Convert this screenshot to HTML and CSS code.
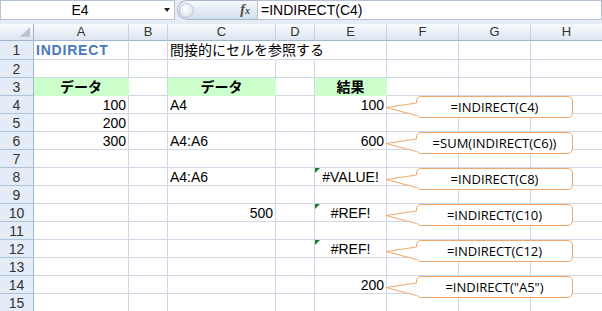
FILE: index.html
```html
<!DOCTYPE html>
<html lang="ja">
<head>
    <meta charset="UTF-8">
    <title>INDIRECT</title>
    <link rel="stylesheet" href="styles.css">
</head>
<body>

    <div class="formula-bar">
        <div class="name-box"><span class="name">E4</span><span class="drop"></span></div>
        <div class="fx-pill"><span class="bead"></span><span class="fx">f<small>x</small></span></div>
        <div class="formula">=INDIRECT(C4)</div>
    </div>

    <div class="sheet">
        <div class="grid">
            <!-- column headers -->
            <div class="corner"><span class="corner-mark"></span></div>
            <div class="col-head">A</div><div class="col-head">B</div><div class="col-head">C</div><div class="col-head">D</div>
            <div class="col-head">E</div><div class="col-head">F</div><div class="col-head">G</div><div class="col-head">H</div>

            <!-- 1 -->
            <div class="row-head">1</div>
            <div class="cell title">INDIRECT</div><div class="cell"></div><div class="cell spill">間接的にセルを参照する</div><div class="cell spill"></div>
            <div class="cell"></div><div class="cell"></div><div class="cell"></div><div class="cell"></div>
            <!-- 2 -->
            <div class="row-head">2</div>
            <div class="cell"></div><div class="cell"></div><div class="cell"></div><div class="cell"></div>
            <div class="cell"></div><div class="cell"></div><div class="cell"></div><div class="cell"></div>
            <!-- 3 -->
            <div class="row-head">3</div>
            <div class="cell head">データ</div><div class="cell"></div><div class="cell head">データ</div><div class="cell"></div>
            <div class="cell head">結果</div><div class="cell"></div><div class="cell"></div><div class="cell"></div>
            <!-- 4 -->
            <div class="row-head">4</div>
            <div class="cell num">100</div><div class="cell"></div><div class="cell">A4</div><div class="cell"></div>
            <div class="cell num">100</div><div class="cell"></div><div class="cell"></div><div class="cell"></div>
            <!-- 5 -->
            <div class="row-head">5</div>
            <div class="cell num">200</div><div class="cell"></div><div class="cell"></div><div class="cell"></div>
            <div class="cell"></div><div class="cell"></div><div class="cell"></div><div class="cell"></div>
            <!-- 6 -->
            <div class="row-head">6</div>
            <div class="cell num">300</div><div class="cell"></div><div class="cell">A4:A6</div><div class="cell"></div>
            <div class="cell num">600</div><div class="cell"></div><div class="cell"></div><div class="cell"></div>
            <!-- 7 -->
            <div class="row-head">7</div>
            <div class="cell"></div><div class="cell"></div><div class="cell"></div><div class="cell"></div>
            <div class="cell"></div><div class="cell"></div><div class="cell"></div><div class="cell"></div>
            <!-- 8 -->
            <div class="row-head">8</div>
            <div class="cell"></div><div class="cell"></div><div class="cell">A4:A6</div><div class="cell"></div>
            <div class="cell err">#VALUE!</div><div class="cell"></div><div class="cell"></div><div class="cell"></div>
            <!-- 9 -->
            <div class="row-head">9</div>
            <div class="cell"></div><div class="cell"></div><div class="cell"></div><div class="cell"></div>
            <div class="cell"></div><div class="cell"></div><div class="cell"></div><div class="cell"></div>
            <!-- 10 -->
            <div class="row-head">10</div>
            <div class="cell"></div><div class="cell"></div><div class="cell num">500</div><div class="cell"></div>
            <div class="cell err">#REF!</div><div class="cell"></div><div class="cell"></div><div class="cell"></div>
            <!-- 11 -->
            <div class="row-head">11</div>
            <div class="cell"></div><div class="cell"></div><div class="cell"></div><div class="cell"></div>
            <div class="cell"></div><div class="cell"></div><div class="cell"></div><div class="cell"></div>
            <!-- 12 -->
            <div class="row-head">12</div>
            <div class="cell"></div><div class="cell"></div><div class="cell"></div><div class="cell"></div>
            <div class="cell err">#REF!</div><div class="cell"></div><div class="cell"></div><div class="cell"></div>
            <!-- 13 -->
            <div class="row-head">13</div>
            <div class="cell"></div><div class="cell"></div><div class="cell"></div><div class="cell"></div>
            <div class="cell"></div><div class="cell"></div><div class="cell"></div><div class="cell"></div>
            <!-- 14 -->
            <div class="row-head">14</div>
            <div class="cell"></div><div class="cell"></div><div class="cell"></div><div class="cell"></div>
            <div class="cell num">200</div><div class="cell"></div><div class="cell"></div><div class="cell"></div>
            <!-- 15 -->
            <div class="row-head">15</div>
            <div class="cell"></div><div class="cell"></div><div class="cell"></div><div class="cell"></div>
            <div class="cell"></div><div class="cell"></div><div class="cell"></div><div class="cell"></div>
        </div>

        <!-- callouts over the sheet -->
        <div class="notes">
            <div class="note at4">=INDIRECT(C4)
                <svg viewBox="0 0 33 22"><polygon points="1,11.5 32.5,7 32.5,19.5" fill="#fff"/><polyline points="31.5,7 1,11.5 31.5,19.5" fill="none" stroke="#f2a868"/></svg>
            </div>
            <div class="note at6">=SUM(INDIRECT(C6))
                <svg viewBox="0 0 33 22"><polygon points="1,11.5 32.5,7 32.5,19.5" fill="#fff"/><polyline points="31.5,7 1,11.5 31.5,19.5" fill="none" stroke="#f2a868"/></svg>
            </div>
            <div class="note at8">=INDIRECT(C8)
                <svg viewBox="0 0 33 22"><polygon points="1,11.5 32.5,7 32.5,19.5" fill="#fff"/><polyline points="31.5,7 1,11.5 31.5,19.5" fill="none" stroke="#f2a868"/></svg>
            </div>
            <div class="note at10">=INDIRECT(C10)
                <svg viewBox="0 0 33 22"><polygon points="1,11.5 32.5,7 32.5,19.5" fill="#fff"/><polyline points="31.5,7 1,11.5 31.5,19.5" fill="none" stroke="#f2a868"/></svg>
            </div>
            <div class="note at12">=INDIRECT(C12)
                <svg viewBox="0 0 33 22"><polygon points="1,11.5 32.5,7 32.5,19.5" fill="#fff"/><polyline points="31.5,7 1,11.5 31.5,19.5" fill="none" stroke="#f2a868"/></svg>
            </div>
            <div class="note at14">=INDIRECT("A5")
                <svg viewBox="0 0 33 22"><polygon points="1,11.5 32.5,7 32.5,19.5" fill="#fff"/><polyline points="31.5,7 1,11.5 31.5,19.5" fill="none" stroke="#f2a868"/></svg>
            </div>
        </div>
    </div>

</body>
</html>
```

FILE: styles.css
```css
body {
    margin: 0;
    width: 602px;
    height: 311px;
    overflow: hidden;
    background: #fff;
    font-family: "Liberation Sans", "Noto Sans CJK JP", sans-serif;
    color: #000;
}

/* formula bar */

.formula-bar {
    display: flex;
    height: 24px;
    padding-bottom: 4px;
    box-sizing: border-box;
    background: #e6ecf4;
}

.name-box {
    width: 175px;
    height: 20px;
    box-sizing: border-box;
    display: flex;
    align-items: center;
    background: #fff;
    border: 1px solid #b4c2d4;
}

.name {
    width: 158px;
    text-align: center;
    font-size: 14px;
}

.drop {
    border-style: solid;
    border-width: 4px 3.5px 0;
    border-color: #222 transparent transparent;
    margin-left: 5px;
}

.fx-pill {
    width: 80px;
    height: 20px;
    margin-left: 2px;
    box-sizing: border-box;
    display: flex;
    align-items: center;
    justify-content: space-between;
    padding: 0 7px 0 1px;
    border: 1px solid #a6b7cd;
    border-right: 0;
    border-radius: 10px 0 0 10px;
    background: linear-gradient(#f6f9fc, #d3dfee);
}

.bead {
    width: 15px;
    height: 15px;
    box-sizing: border-box;
    border-radius: 50%;
    border: 1px solid #b8c6d8;
    background: radial-gradient(circle at 40% 35%, #fff, #d0dbe9);
}

.fx {
    font-family: "Liberation Serif", serif;
    font-style: italic;
    font-weight: bold;
    font-size: 14px;
    color: #4a4a4a;
}

.fx small {
    font-size: 10px;
}

.formula {
    flex: 1;
    height: 20px;
    box-sizing: border-box;
    padding-left: 3px;
    border: 1px solid #b4c2d4;
    background: #fff;
    font-size: 14px;
    line-height: 18px;
}

/* sheet */

.sheet {
    position: relative;
}

.grid,
.notes {
    display: grid;
    width: 603px;
    grid-template-columns: 34px 95px 39px 108px 39px 72px 72px 72px 72px;
    grid-template-rows: 17px 19px repeat(14, 18px);
}

.corner,
.col-head {
    box-sizing: border-box;
    background: linear-gradient(#f9fbfd, #dce5f1);
    border-right: 1px solid #c5d2e2;
    border-bottom: 1px solid #9eb6ce;
}

.corner {
    display: flex;
    justify-content: flex-end;
    align-items: flex-end;
    padding: 0 3px 3px 0;
    border-right-color: #9eb6ce;
}

.corner-mark {
    border-style: solid;
    border-width: 0 0 10px 10px;
    border-color: transparent transparent #b7c5d7;
}

.col-head {
    text-align: center;
    font-size: 13px;
    line-height: 16px;
    color: #333;
}

.row-head {
    box-sizing: border-box;
    background: #e4ecf7;
    border-right: 1px solid #9eb6ce;
    border-bottom: 1px solid #aec3d8;
    text-align: center;
    font-size: 14px;
    line-height: 15px;
    padding-top: 2px;
    color: #333;
}

.cell {
    position: relative;
    box-sizing: border-box;
    padding: 2px 2px 0;
    border-right: 1px solid #d0d7e5;
    border-bottom: 1px solid #d0d7e5;
    font-size: 14px;
    line-height: 15px;
    white-space: nowrap;
}

.spill {
    border-right-color: transparent;
}

.title {
    color: #4979b8;
    font-weight: bold;
    letter-spacing: 0.8px;
}

.head {
    background: #ccffcc;
    border-color: #ccffcc;
    text-align: center;
    font-weight: bold;
}

.num {
    text-align: right;
}

.err {
    text-align: center;
}

.err::before {
    content: "";
    position: absolute;
    left: 0;
    top: 0;
    border-style: solid;
    border-width: 5px 5px 0 0;
    border-color: #1c7a30 transparent transparent;
}

/* callouts */

.notes {
    position: absolute;
    top: 0;
    left: 0;
}

.note {
    grid-column: 7 / span 3;
    align-self: start;
    justify-self: start;
    position: relative;
    width: 157px;
    height: 22px;
    margin-left: 29px;
    box-sizing: border-box;
    border: 1px solid #f2a868;
    border-radius: 5px;
    background: #fff;
    font-family: "Open Sans", sans-serif;
    font-size: 13px;
    line-height: 20px;
    text-align: center;
}

.note svg {
    position: absolute;
    left: -32px;
    top: -1px;
    width: 33px;
    height: 22px;
}

.at4 { grid-row: 5 / span 2; }
.at6 { grid-row: 7 / span 2; }
.at8 { grid-row: 9 / span 2; }
.at10 { grid-row: 11 / span 2; }
.at12 { grid-row: 13 / span 2; }
.at14 { grid-row: 15 / span 2; }
```
